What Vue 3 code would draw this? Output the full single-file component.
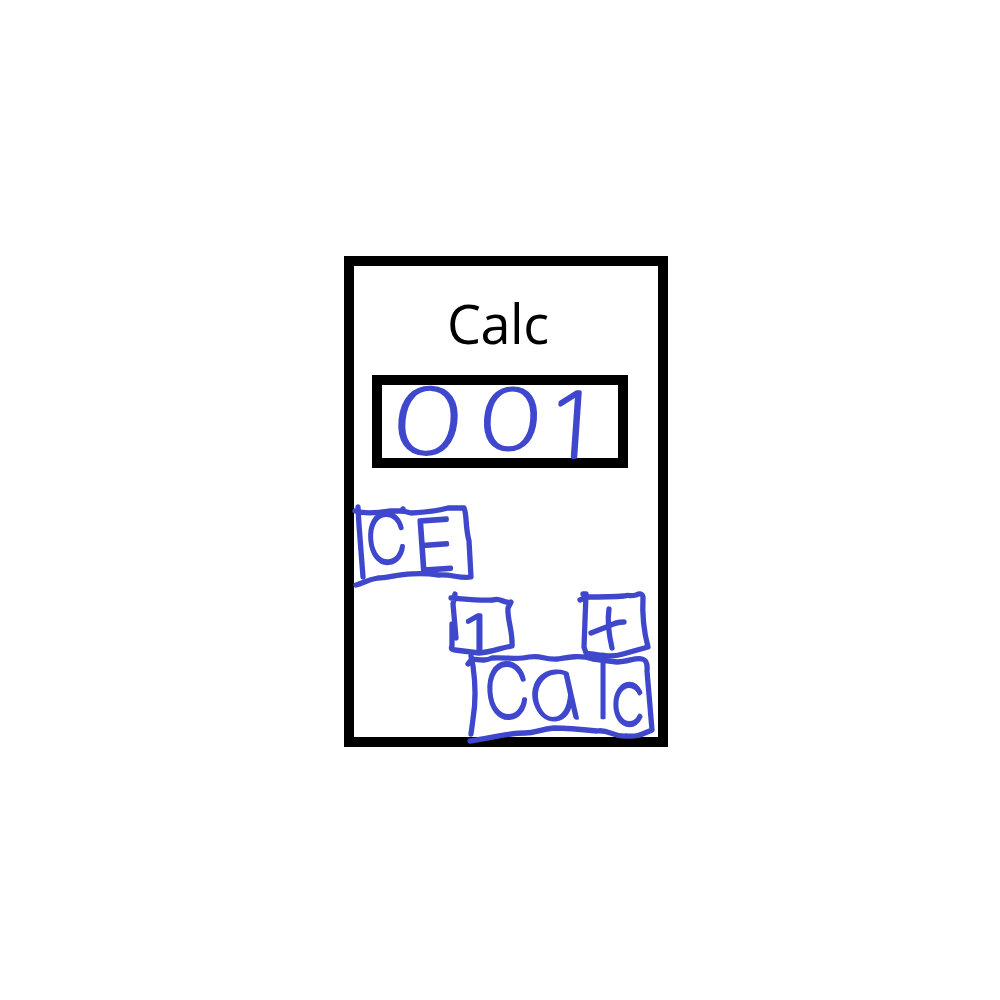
<script setup>
const ctx = document.createElement('canvas').getContext('2d')

// Fits the ink of a character into a box; the pen keeps its width.
function glyph(char, x, y, w, h, opts = {}) {
  const family = opts.family || 'Inter'
  const weight = opts.weight || 100
  const style = opts.style || 'normal'
  ctx.font = `${style} ${weight} 100px "${family}", sans-serif`
  const m = ctx.measureText(char)
  const inkW = m.actualBoundingBoxRight + m.actualBoundingBoxLeft
  const inkH = m.actualBoundingBoxAscent + m.actualBoundingBoxDescent
  const sy = h / inkH
  const sx = w / inkW
  const tx = x + m.actualBoundingBoxLeft * sx
  const ty = y + m.actualBoundingBoxAscent * sy
  const cx = x + w / 2
  const cy = y + h / 2
  return {
    char,
    transform: `rotate(${opts.rotate || 0} ${cx} ${cy}) translate(${cx} ${cy}) skewX(${opts.skew || 0}) translate(${-cx} ${-cy}) translate(${tx} ${ty}) scale(${sx} ${sy})`,
    pen: (opts.pen || 4) / Math.sqrt(sx * sy),
    family: `"${family}", sans-serif`,
    weight,
    style
  }
}

const display = [
  glyph('0', 400.5, 387, 55, 67.5, { skew: -3, rotate: 3, pen: 3.7 }),
  glyph('0', 486, 388, 49, 62, { skew: -4, pen: 3.7 }),
  glyph('1', 559, 392, 19, 65, { skew: -4 })
]

const rows = [
  {
    name: 'clear',
    keys: [
      {
        label: 'CE', x: 354, y: 505, w: 119, h: 82,
        lines: [
          'M358 507 L359 525 L363 577',
          'M355 511 C365 514 377 513 389 511 L403 511 L411 513 C429 512 437 511 448 508 L464 508 C467 514 465 526 469 541 L471 577 C460 579 452 574 439 575 C410 571 393 577 378 578 C366 580 364 583 356 585',
          'M403 509 L403 511'
        ],
        glyphs: [
          glyph('C', 370, 513, 33, 50, { rotate: -4 }),
          glyph('E', 421, 519, 29, 51, { rotate: -4 })
        ]
      }
    ]
  },
  {
    name: 'middle',
    keys: [
      {
        label: '1', x: 448, y: 592, w: 67, h: 65,
        lines: [
          'M455 594 L453 604 L456 638 M452 624 L452 646 Q450 650 455 650 L479 653 C492 652 500 648 512 646 C513 632 507 619 508 608 L511 602 C503 604 501 597 493 600 C478 601 465 599 451 598'
        ],
        glyphs: [glyph('1', 468, 615, 12.5, 37)]
      },
      {
        label: '+', x: 580, y: 592, w: 70, h: 65,
        lines: [
          'M583 594 L586 594 L584 647 L586 653 C600 655 610 658 623 654 L648 647 C644 632 642 616 643 597 Q642 592 636 595 C627 597 631 594 624 596 C611 597 598 597 587 597 L580 600',
          'M609 609 C607 622 609 635 612 648 M591 633 L609 626 Q616 622 624 622'
        ],
        glyphs: []
      }
    ]
  },
  {
    name: 'bottom',
    keys: [
      {
        label: 'Calc', x: 467, y: 650, w: 188, h: 93,
        lines: [
          'M471 656 L473 666 C475 680 476 701 473 719 L471 734',
          'M468 664 L472 659 C481 660 486 661 492 658 C505 657 516 660 529 657 C543 655 543 660 558 659 C569 657 581 655 593 659 L617 662 C628 662 636 657 642 659 Q648 660 647 671 L652 730 C642 734 639 737 626 736 C612 737 609 729 597 731 C578 729 568 728 554 728 C540 729 536 733 525 733 C507 733 492 738 470 741'
        ],
        glyphs: [
          glyph('C', 489, 663, 36, 55, { rotate: -4 }),
          glyph('a', 533, 671, 42, 49, { family: 'Lato', style: 'italic', skew: 17, rotate: -3 }),
          glyph('l', 601.2, 654, 3, 64, { pen: 2.6 }),
          glyph('c', 615, 683, 26, 43)
        ]
      }
    ]
  }
]
</script>

<template>
  <main class="page">
    <section class="calculator">
      <h1 class="title">Calc</h1>
      <div class="display">
        <svg viewBox="382 385 236 73" width="236" height="73">
          <text
            v-for="(g, i) in display" :key="i" class="ink" :transform="g.transform"
            :stroke-width="g.pen" :font-family="g.family" :font-weight="g.weight" :font-style="g.style"
          >{{ g.char }}</text>
        </svg>
      </div>
      <div v-for="row in rows" :key="row.name" class="row" :class="row.name">
        <svg
          v-for="k in row.keys" :key="k.label" class="key" role="button" :aria-label="k.label"
          :viewBox="`${k.x} ${k.y} ${k.w} ${k.h}`" :width="k.w" :height="k.h"
        >
          <path v-for="d in k.lines" :key="d" :d="d" class="line" />
          <text
            v-for="(g, i) in k.glyphs" :key="i" class="ink" :transform="g.transform"
            :stroke-width="g.pen" :font-family="g.family" :font-weight="g.weight" :font-style="g.style"
          >{{ g.char }}</text>
        </svg>
      </div>
    </section>
  </main>
</template>

<style>
body {
  margin: 0;
  background: #fff;
}
</style>

<style scoped>
.page {
  box-sizing: border-box;
  height: 1000px;
  padding: 256px 0 0 344px;
}
.calculator {
  box-sizing: border-box;
  width: 324px;
  height: 491px;
  border: 10px solid #000;
  display: flex;
  flex-direction: column;
}
.title {
  margin: 23px 0 0 93px;
  height: 86px;
  flex: none;
  font: 400 54px/68px "Open Sans", "Noto Sans", sans-serif;
  letter-spacing: -0.5px;
  color: #000;
}
.display {
  box-sizing: border-box;
  flex: none;
  width: 256px;
  height: 93px;
  margin-left: 18px;
  border: 10px solid #000;
}
.display svg {
  display: block;
  overflow: visible;
}
.row {
  display: flex;
  flex: none;
}
.clear {
  margin-top: 37px;
}
.middle {
  margin: 5px 0 -7px 94px;
  gap: 65px;
}
.bottom {
  margin-left: 113px;
}
.key {
  flex: none;
  display: block;
  overflow: visible;
}
.line {
  fill: none;
  stroke: #3f48cc;
  stroke-width: 5.3;
  stroke-linecap: round;
  stroke-linejoin: round;
}
.ink {
  font-size: 100px;
  fill: #3f48cc;
  stroke: #3f48cc;
  stroke-linejoin: round;
}
</style>
